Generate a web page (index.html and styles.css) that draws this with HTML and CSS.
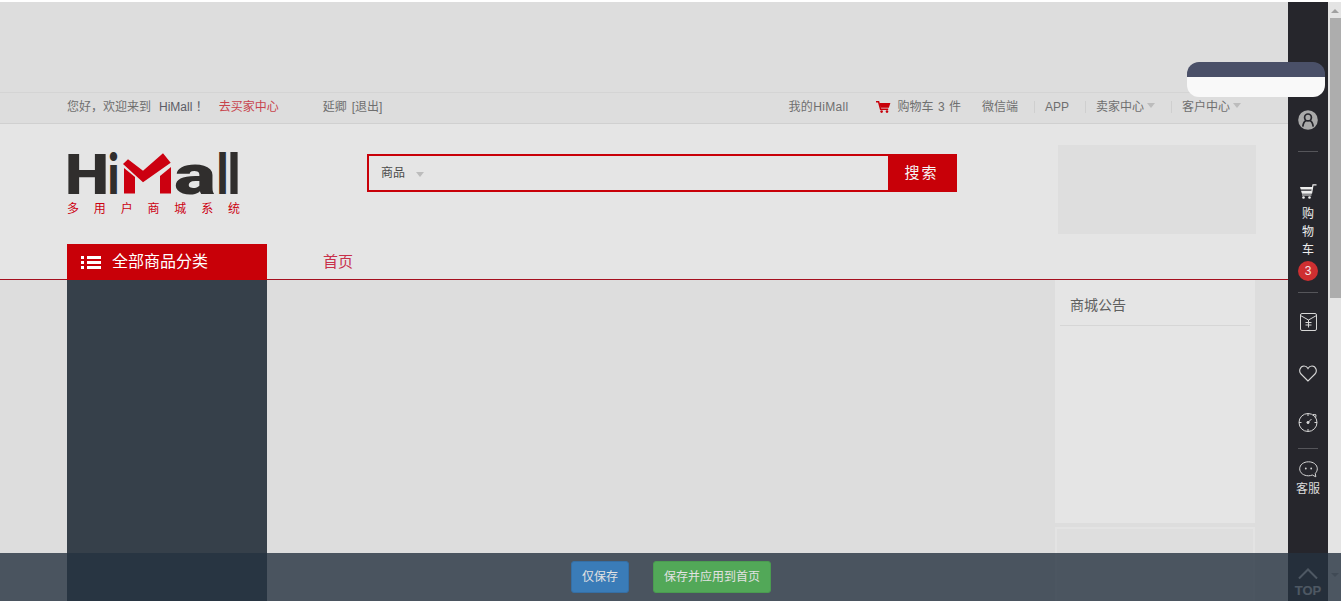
FILE: index.html
```html
<!DOCTYPE html>
<html lang="zh-CN">
<head>
<meta charset="utf-8">
<title>HiMall</title>
<link rel="stylesheet" href="styles.css">
</head>
<body>
<div class="page">
  <main class="main">
    <div class="banner"></div>
    <div class="topbar">
      <div class="top-left">
        <span>您好，欢迎来到</span>
        <span class="brand-name">HiMall ！</span>
        <a class="buyer">去买家中心</a>
        <span class="user">延卿</span>
        <span class="logout">[退出]</span>
      </div>
      <div class="top-right">
        <span class="my-mall">我的HiMall</span>
        <svg class="mini-cart" width="15" height="12" viewBox="0 0 15 12"><path d="M0 .8h2.600l2 7.400h7.600" fill="none" stroke="#c8000a" stroke-width="1.500"/><path d="M3.400 2h11l-1.600 4.800H4.600z" fill="#c8000a"/><circle cx="5.600" cy="10.600" r="1.300" fill="#c8000a"/><circle cx="11" cy="10.600" r="1.300" fill="#c8000a"/></svg>
        <span class="cart-text">购物车 3 件</span>
        <span class="wechat">微信端</span>
        <i class="sep"></i>
        <span>APP</span>
        <i class="sep"></i>
        <span>卖家中心</span><i class="caret"></i>
        <i class="sep sep-wide"></i>
        <span>客户中心</span><i class="caret"></i>
      </div>
    </div>
    <header class="header">
      <div class="logo">
        <svg class="logo-mark" width="174" height="68" viewBox="0 -12 174 68">
          <text class="logo-word" x="-2" y="42" textLength="44" lengthAdjust="spacingAndGlyphs">H</text>
          <text class="logo-word" x="41" y="42" textLength="11" lengthAdjust="spacingAndGlyphs">i</text>
          <polygon points="56,12 61,7.300 76,18.700 96,1.300 103.700,10.700 76,30.300" fill="#cc0010"/>
          <polygon points="57,16 68,25 68,41.500 57,41.500" fill="#cc0010"/>
          <polygon points="93,24 104,15 104,41.500 93,41.500" fill="#cc0010"/>
          <text class="logo-word" x="107" y="42" textLength="42" lengthAdjust="spacingAndGlyphs">a</text>
          <text class="logo-word" x="150" y="42" textLength="11" lengthAdjust="spacingAndGlyphs">l</text>
          <text class="logo-word" x="161" y="42" textLength="12" lengthAdjust="spacingAndGlyphs">l</text>
        </svg>
        <div class="slogan"><span>多</span><span>用</span><span>户</span><span>商</span><span>城</span><span>系</span><span>统</span></div>
      </div>
      <form class="search">
        <div class="search-field"><span>商品</span><i class="caret search-caret"></i></div>
        <div class="search-btn">搜索</div>
      </form>
      <div class="ad"></div>
    </header>
    <nav class="nav">
      <div class="all-cat">
        <svg width="20" height="13" viewBox="0 0 20 13" fill="#fff"><rect y="0" width="3" height="3"/><rect y="5" width="3" height="3"/><rect y="10" width="3" height="3"/><rect x="6" y="0" width="14" height="3"/><rect x="6" y="5" width="14" height="3"/><rect x="6" y="10" width="14" height="3"/></svg>
        <span>全部商品分类</span>
      </div>
      <a class="nav-link">首页</a>
    </nav>
    <section class="content">
      <div class="cat-panel"></div>
      <aside class="side-col">
        <div class="notice"><h3>商城公告</h3></div>
        <div class="side-box"></div>
      </aside>
    </section>
  </main>

  <div class="rail">
    <svg class="r-user" width="20" height="20" viewBox="0 0 20 20"><circle cx="10" cy="10" r="9.800" fill="#a9a9a9"/><circle cx="10" cy="7.400" r="3.400" fill="none" stroke="#26262c" stroke-width="1.700"/><path d="M4.800 16.600c.4-3.600 2-5.600 3.400-6M15.200 16.600c-.4-3.600-2-5.600-3.400-6" fill="none" stroke="#26262c" stroke-width="1.700"/></svg>
    <i class="r-line r-line-1"></i>
    <svg class="r-cart" width="17" height="15" viewBox="0 0 17 15"><path d="M11.500 9.500L13 .8h3.500" fill="none" stroke="#eee" stroke-width="1.200"/><path d="M0 3h12.500l-.4 2.600H.8zM1 6.800h10.900l-.4 3H2z" fill="#eee"/><rect x="2" y="10.500" width="9.500" height="1" fill="#eee"/><circle cx="3.500" cy="13.500" r="1.300" fill="#eee"/><circle cx="9.500" cy="13.500" r="1.300" fill="#eee"/></svg>
    <div class="r-cart-text"><span>购</span><span>物</span><span>车</span></div>
    <div class="r-badge">3</div>
    <i class="r-line r-line-2"></i>
    <svg class="r-icon r-gift" width="17" height="18" viewBox="0 0 17 18" fill="none" stroke="#d6d6d6" stroke-width="1"><rect x=".5" y=".5" width="16" height="17" rx="1.500"/><path d="M.5 2.500l8 4.500 8-4.500M5.500 9.500h6M5.500 12h6M8.500 7v7.500"/></svg>
    <svg class="r-icon r-heart" width="18" height="17" viewBox="0 0 18 17" fill="none" stroke="#d6d6d6" stroke-width="1.100"><path d="M9 16L2 9C-.6 6.300 1 1 5 1c2 0 3.200 1 4 2.500C9.800 2 11 1 13 1c4 0 5.600 5.300 3 8z"/></svg>
    <svg class="r-icon r-clock" width="20" height="20" viewBox="0 0 20 20" fill="none" stroke="#d6d6d6" stroke-width="1"><circle cx="10" cy="10.500" r="9"/><path d="M10 1.500v2.500M10 17v2.500M1 10.500h2.500M16.500 10.500H19M10 10.500l3.500-3.500M15 2.500l3 .3-.3 3"/><circle cx="10" cy="10.500" r="1.100" fill="#d6d6d6"/></svg>
    <i class="r-line r-line-3"></i>
    <svg class="r-icon r-chat" width="19" height="17" viewBox="0 0 19 17" fill="none" stroke="#d6d6d6" stroke-width="1"><path d="M9.500 .8c5 0 8.800 3 8.800 7 0 1.800-.8 3.300-2 4.500l.5 3.500-3.500-1.800c-1.200.5-2.500.8-3.800.8-5 0-8.800-3-8.800-7s3.800-7 8.800-7z"/><circle cx="6.800" cy="7.500" r=".9" fill="#d6d6d6" stroke="none"/><circle cx="12.200" cy="7.500" r=".9" fill="#d6d6d6" stroke="none"/></svg>
    <div class="r-service">客服</div>
    <svg class="r-up" width="20" height="11" viewBox="0 0 20 11" fill="none" stroke="#eee" stroke-width="2"><path d="M1 10.500L10 1.500l9 9"/></svg>
    <div class="r-top">TOP</div>
  </div>

  <div class="scrollbar">
    <i class="sb-up"></i>
    <div class="sb-thumb"></div>
    <i class="sb-down"></i>
  </div>

  <div class="pill"></div>

  <div class="savebar">
    <button class="btn btn-blue" type="button">仅保存</button>
    <button class="btn btn-green" type="button">保存并应用到首页</button>
  </div>
</div>
</body>
</html>
```
FILE: styles.css
```css
* { box-sizing: border-box; }
html, body { margin: 0; height: 601px; overflow: hidden; background: #fff; }
body { font: 12px/1.4 "Liberation Sans", "Noto Sans CJK SC", sans-serif; color: #6f6f6f; }
i { display: block; font-style: normal; }

.page { position: relative; display: flex; width: 1341px; height: 601px; padding-top: 2px; overflow: hidden; }
.main { width: 1288px; display: flex; flex-direction: column; background: #ddd; }
.banner { height: 90px; flex: none; }

.topbar { height: 32px; flex: none; display: flex; justify-content: space-between; align-items: center; padding: 0 47px 2px 67px; border-top: 1px solid #d4d4d4; border-bottom: 1px solid #d0d0d0; }
.top-left, .top-right { display: flex; align-items: center; }
.brand-name { margin-left: 8px; color: #5c5c66; }
.buyer { margin-left: 11px; color: #c8444c; }
.user { margin-left: 44px; }
.logout { margin-left: 5px; }
.my-mall { letter-spacing: .35px; }
.mini-cart { margin-left: 27px; }
.cart-text { margin-left: 7px; word-spacing: 1px; }
.wechat { margin-left: 21px; }
.sep { width: 1px; height: 12px; margin: 0 10px 0 16px; background: #cfcfcf; }
.caret { width: 0; height: 0; margin: 0 0 2px 3px; border: 4px solid transparent; border-top: 5px solid #bcbcbc; border-bottom: 0; }
.sep-wide { margin-left: 16px; }

.header { height: 120px; flex: none; display: flex; align-items: flex-start; padding-left: 67px; background: #e5e5e5; }
.logo { width: 174px; padding-top: 16px; }
.logo-mark { display: block; overflow: visible; }
.logo-word { font: 900 55px "Roboto", "Liberation Sans", sans-serif; fill: #302e2d; }
.slogan { display: flex; justify-content: space-between; width: 173px; margin-top: -7px; font-size: 12px; line-height: 16px; color: #cc0010; }
.search { display: flex; width: 590px; height: 38px; margin: 30px 0 0 126px; }
.search-field { flex: 1; display: flex; align-items: center; padding-left: 12px; border: 2px solid #c80008; border-right: 0; color: #4a4a4a; }
.search-caret { margin: 2px 0 0 11px; }
.search-btn { width: 69px; padding-right: 2px; background: #c80008; color: #f5f5f5; font-size: 15px; line-height: 38px; text-align: center; letter-spacing: 2px; }
.ad { width: 198px; height: 89px; margin: 21px 0 0 101px; background: #dedede; }

.nav { height: 36px; flex: none; display: flex; padding-left: 67px; background: #e5e5e5; border-bottom: 1px solid #a5101f; }
.all-cat { width: 200px; height: 36px; display: flex; align-items: center; gap: 11px; padding-left: 14px; background: #c80008; color: #fff; font-size: 16px; position: relative; z-index: 1; }
.nav-link { margin-left: 56px; font-size: 15px; line-height: 35px; color: #c8304a; }

.content { flex: 1; display: flex; justify-content: space-between; padding: 0 33px 0 67px; }
.cat-panel { width: 200px; background: #36404a; }
.side-col { width: 200px; }
.notice { height: 243px; padding: 0 5px; background: #e5e5e5; }
.notice h3 { margin: 0; height: 46px; padding-left: 10px; border-bottom: 1px solid #d6d6d6; font-size: 14px; font-weight: 400; line-height: 50px; color: #5f5f5f; }
.side-box { height: 90px; margin-top: 4px; border: 2px solid #e3e3e3; background: #dedede; }

.rail { width: 40px; flex: none; display: flex; flex-direction: column; align-items: center; background: #26262c; color: #eee; }
.rail svg { display: block; flex: none; }
.r-line { width: 20px; height: 1px; flex: none; background: #55555a; }
.r-user { margin-top: 108px; }
.r-line-1 { margin-top: 21px; }
.r-cart { margin-top: 32px; }
.r-cart-text { margin-top: 6px; display: flex; flex-direction: column; line-height: 18px; }
.r-badge { width: 20px; height: 20px; margin-top: 2px; flex: none; border-radius: 50%; background: #cf2f31; color: #f5e5e5; line-height: 20px; text-align: center; }
.r-line-2 { margin-top: 11px; }
.r-gift { margin-top: 20px; }
.r-heart { margin-top: 34px; }
.r-clock { margin-top: 30px; }
.r-line-3 { margin-top: 16px; }
.r-chat { margin-top: 12px; }
.r-service { margin-top: 2px; line-height: 18px; color: #dcdcdc; }
.r-up { margin-top: 70px; }
.r-top { margin-top: 4px; font-weight: 700; font-size: 13px; line-height: 16px; color: #eee; }

.scrollbar { flex: 1; position: relative; display: flex; flex-direction: column; align-items: flex-end; background: #e4e4e4; }
.sb-up { width: 0; height: 0; margin: 7px 2px 0 0; border: 4px solid transparent; border-bottom: 4px solid #a0a0a0; border-top: 0; }
.sb-thumb { width: 11px; height: 280px; margin-top: 5px; background: #adadad; }
.sb-down { width: 0; height: 0; margin: 275px 2px 0 0; border: 4px solid transparent; border-top: 4px solid #a8a8a8; border-bottom: 0; }

.pill { position: absolute; left: 1187px; top: 62px; width: 138px; height: 35px; border-radius: 12px; background: linear-gradient(#4a5068 15px, #f9f9f9 15px); }

.savebar { position: absolute; left: 0; right: 0; bottom: 0; height: 48px; display: flex; justify-content: center; gap: 24px; padding: 8px 0 0 1px; background: rgba(38, 50, 64, .8); }
.btn { height: 32px; padding: 0; border: 1px solid transparent; border-radius: 3px; color: #e2e2e2; font: 12px/1 "Liberation Sans", "Noto Sans CJK SC", sans-serif; }
.btn-blue { width: 58px; background: #3a7cb8; border-color: #356fa5; }
.btn-green { width: 118px; background: #52a858; border-color: #4a9c50; }
```
